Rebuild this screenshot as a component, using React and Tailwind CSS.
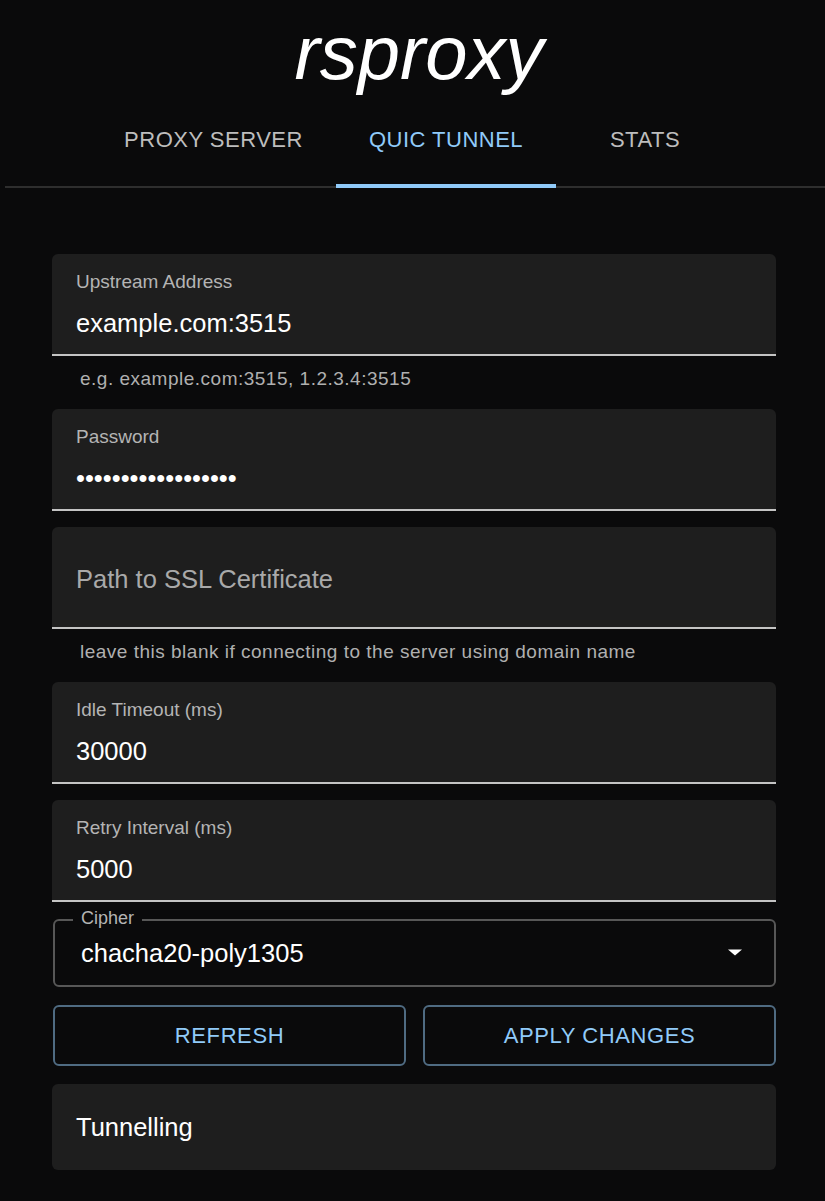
import React from "react";

const font = { fontFamily: '"Liberation Sans", Arial, sans-serif' };

function FilledField({ label, value, helper, placeholder }) {
  return (
    <div className="flex flex-col">
      <div className="h-[102px] bg-[#1e1e1e] rounded-t-[6px] border-b-2 border-[#c4c4c4] px-[24px] flex flex-col">
        {placeholder ? (
          <div className="mt-[37px] text-[25.5px] leading-[30px] text-[#a9a9a9]">{placeholder}</div>
        ) : (
          <>
            <div className="mt-[16px] text-[19px] leading-[24px] text-[#b4b4b4]">{label}</div>
            <div className="mt-[14px] text-[25.5px] leading-[30px] text-white">{value}</div>
          </>
        )}
      </div>
      {helper && (
        <div className="pt-[11px] h-[37px] px-[28px] text-[19px] leading-[24px] text-[#b0b0b0] tracking-[0.5px]">
          {helper}
        </div>
      )}
    </div>
  );
}

export default function App() {
  return (
    <div className="min-h-[1201px] w-[825px] bg-[#0a0a0b] text-white" style={font}>
      <div className="flex justify-center pt-[14px] pl-[13px]">
        <div className="italic text-[76px] leading-[78px] text-white">rsproxy</div>
      </div>
      <div className="ml-[5px] border-b-2 border-[#2e2e2e] flex">
        <div className="ml-[86px] w-[245px] h-[94px] flex items-center justify-center text-[22px] tracking-[0.5px] text-[#bdbdbd]">
          PROXY SERVER
        </div>
        <div className="w-[220px] h-[94px] flex items-center justify-center text-[22px] tracking-[0.5px] text-[#90caf9] relative">
          QUIC TUNNEL
          <div className="absolute left-0 right-0 bottom-[-2px] h-[4px] bg-[#90caf9]" />
        </div>
        <div className="w-[178px] h-[94px] flex items-center justify-center text-[22px] tracking-[0.5px] text-[#bdbdbd]">
          STATS
        </div>
      </div>

      <div className="mx-[52px] w-[724px] mt-[66px] flex flex-col">
        <FilledField label="Upstream Address" value="example.com:3515" helper="e.g. example.com:3515, 1.2.3.4:3515" />
        <div className="mt-[16px]">
          <FilledField label="Password" value="••••••••••••••••••" />
        </div>
        <div className="mt-[16px]">
          <FilledField placeholder="Path to SSL Certificate" helper="leave this blank if connecting to the server using domain name" />
        </div>
        <div className="mt-[16px]">
          <FilledField label="Idle Timeout (ms)" value="30000" />
        </div>
        <div className="mt-[16px]">
          <FilledField label="Retry Interval (ms)" value="5000" />
        </div>

        <div className="mt-[17px] relative h-[68px] rounded-[6px] border-2 border-[#575757] flex items-center px-[26px] ml-[1px]">
          <div className="absolute left-[18px] top-[-15px] px-[8px] bg-[#0a0a0b] text-[18px] leading-[24px] text-[#b4b4b4]">Cipher</div>
          <div className="text-[25.5px] leading-[30px] text-white">chacha20-poly1305</div>
          <svg className="ml-auto mr-[1px]" width="24" height="24" viewBox="0 0 24 24">
            <path d="M5 9h14l-7 7z" fill="#ffffff" transform="translate(0 -0.5) scale(1 0.85) translate(0 1.5)" />
          </svg>
        </div>

        <div className="mt-[18px] flex gap-[17px] ml-[1px]">
          <div className="flex-1 h-[61px] rounded-[6px] border-2 border-[#4f6b82] flex items-center justify-center text-[22px] tracking-[0.6px] text-[#90caf9]">
            REFRESH
          </div>
          <div className="flex-1 h-[61px] rounded-[6px] border-2 border-[#4f6b82] flex items-center justify-center text-[22px] tracking-[0.6px] text-[#90caf9]">
            APPLY CHANGES
          </div>
        </div>

        <div className="mt-[18px] h-[86px] rounded-[6px] bg-[#1e1e1e] flex items-center px-[24px] text-[25.5px] text-white">
          Tunnelling
        </div>
      </div>
    </div>
  );
}
